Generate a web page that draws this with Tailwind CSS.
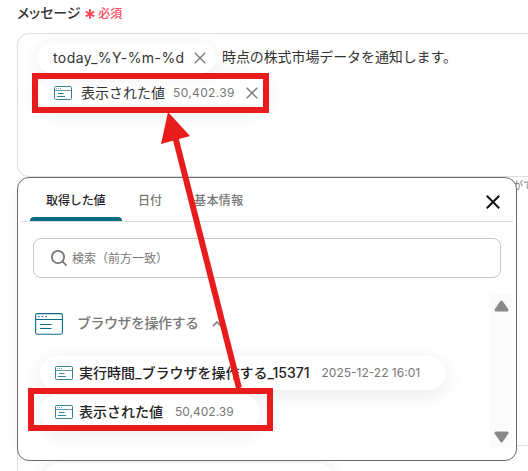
<!DOCTYPE html>
<html lang="ja">
<head>
<meta charset="utf-8">
<title>メッセージ</title>
<script src="https://cdn.jsdelivr.net/npm/@tailwindcss/browser@4"></script>
</head>
<body class="bg-white">
<svg class="hidden">
  <symbol id="browser" viewBox="0 0 28 22"><g fill="none" stroke="currentColor" stroke-width="1.1"><rect x=".6" y=".6" width="26.8" height="20.6" rx="1.6"/><path d="M1 6.5H27M5 11.5H16.5M5 15.5H16.5"/><path d="M3.2 3.6H12" stroke-dasharray="1.4 2.2"/></g></symbol>
  <symbol id="browser-small" viewBox="0 0 18 14"><g fill="none" stroke="currentColor"><rect x=".5" y=".5" width="17" height="13" rx="1"/><path d="M1 4.5H17" stroke-width=".8"/><path d="M4 7.5H9.5M3 10.5H11" stroke-width="1"/><path d="M2 2.5H8" stroke-width=".7" stroke-dasharray="1 1"/></g></symbol>
  <symbol id="cross" viewBox="0 0 12 12"><path d="M.7.7 11.3 11.3M11.3.7.7 11.3" fill="none" stroke="currentColor" stroke-width="1.3"/></symbol>
</svg>
<main class="relative h-[471px] w-[528px] overflow-hidden font-['Inter','Noto_Sans_CJK_JP',sans-serif] text-[#333] whitespace-nowrap">
  <div class="flex h-[33px] items-center pb-[8px] pl-[17px]">
    <span class="text-[14px] font-medium tracking-[-0.1px] [font-feature-settings:'palt']">メッセージ</span>
    <svg class="ml-[5px] mt-[3px] h-[10px] w-[10px]" viewBox="0 0 10 10"><path d="M5 .3V9.7M.8 2.6 9.2 7.4M9.2 2.6.8 7.4" stroke="#ff4b60" stroke-width="2"/></svg>
    <span class="ml-[3px] mt-[2px] text-[12px] font-medium text-[#ff4b60]">必須</span>
  </div>
  <section class="ml-[17px] h-[144px] w-[530px] rounded-[12px] border border-[#dddddf] pt-[9px] pl-[19px]">
    <div class="flex h-[30px] items-center">
      <div class="flex h-[30px] w-[179px] items-center rounded-full bg-white pl-[16px] shadow-[0_3px_18px_rgba(0,0,0,0.08)]">
        <span class="mt-[-1px] text-[14px] tracking-[0.43px]">today_%Y-%m-%d</span>
        <svg class="ml-[9px] h-3 w-3 text-[#777]"><use href="#cross"/></svg>
      </div>
      <span class="ml-[6px] mt-[-3px] text-[14px] tracking-[-0.1px]">時点の株式市場データを通知します。</span>
    </div>
    <div class="mt-[5px] flex h-[30px] w-[231px] items-center rounded-full bg-white pl-[17px] shadow-[0_3px_22px_rgba(0,0,0,0.1)]">
      <svg class="h-[14px] w-[18px] text-[#398398]"><use href="#browser-small"/></svg>
      <span class="mt-[-2px] ml-[9px] text-[14px]">表示された値</span>
      <span class="ml-[8px] text-[12px] tracking-[0.35px] text-[#777]">50,402.39</span>
      <svg class="ml-[11px] h-3 w-3 text-[#777]"><use href="#cross"/></svg>
    </div>
  </section>
  <div class="flex h-[20px] justify-end pt-[1px] text-[10px] text-[#777]"><span class="mr-[-5px]">がで</span></div>
  <div class="ml-[17px] h-[249px] border-b border-[#e2e2e4]"></div>
  <div class="ml-[17px] h-[25px] border-l border-[#ddd] pt-[17px] pl-[26px]"><div class="h-[32px] w-[290px] rounded-full bg-white shadow-[0_0_16px_rgba(0,0,0,0.1)]"></div></div>

  <section class="absolute top-[177px] left-[17px] flex h-[284px] w-[500px] flex-col rounded-[12px] border border-[#6b6b6b] bg-white px-[3px] shadow-[-8px_0_18px_-8px_rgba(0,0,0,0.04)]">
    <nav class="flex h-[44px] shrink-0 border-b border-[#dddddf] pl-[9px] text-[12px] font-medium text-[#777]">
      <div class="flex h-[43px] w-[92px] flex-col justify-between">
        <span class="pt-[14px] pl-[16px] tracking-[-0.1px] text-[#222]">取得した値</span>
        <i class="h-[4px] shrink-0 rounded-t-[4px] bg-[#0b6c83]"></i>
      </div>
      <span class="ml-[16px] pt-[14px]">日付</span>
      <span class="ml-[32px] pt-[14px] tracking-[0.4px]">基本情報</span>
      <svg class="mt-[17px] mr-[13px] ml-auto h-[14px] w-[14px]" viewBox="0 0 14 14"><path d="m.8.8 12.4 12.4M13.2.8.8 13.2" stroke="#111" stroke-width="2"/></svg>
    </nav>
    <div class="mt-[16px] ml-[12px] flex h-[40px] w-[468px] shrink-0 items-center rounded-[8px] border border-[#c8c8c8] pl-[17px]">
      <svg class="h-4 w-4" viewBox="0 0 16 16" fill="none" stroke="#777" stroke-width="1.8"><circle cx="7" cy="7" r="6.1"/><path d="m11.4 11.4 4.2 4.1"/></svg>
      <span class="mt-[2px] ml-[5px] text-[12px] text-[#777]">検索（前方一致）</span>
    </div>
    <div class="mt-[16px] flex h-[154px] shrink-0 overflow-hidden">
      <div class="w-[469px] overflow-hidden">
        <div class="flex h-[60px] items-center pl-[14px]">
          <svg class="h-[22px] w-[28px] text-[#0b6c83]"><use href="#browser"/></svg>
          <span class="mt-[-3px] ml-[14px] text-[14px] font-medium tracking-[-0.5px] text-[#777]">ブラウザを操作する</span>
          <svg class="ml-[13px] h-[6px] w-[10px]" viewBox="0 0 10 6"><path d="m.8 5.2 4.2-4.2 4.2 4.2" fill="none" stroke="#777" stroke-width="1.5"/></svg>
        </div>
        <div class="mt-[2px] ml-[19px] flex h-[34px] w-[406px] items-center rounded-full bg-white pl-[15px] shadow-[0_5px_20px_rgba(0,0,0,0.09)]">
          <svg class="h-[14px] w-[18px] text-[#398398]"><use href="#browser-small"/></svg>
          <span class="mt-[-2px] ml-[6px] text-[14px] font-medium text-[#222]">実行時間_ブラウザを操作する_15371</span>
          <span class="ml-[12px] text-[12px] text-[#777]">2025-12-22 16:01</span>
        </div>
        <div class="mt-[5px] ml-[19px] flex h-[34px] w-[220px] items-center rounded-full bg-white pl-[15px] shadow-[0_5px_20px_rgba(0,0,0,0.09)]">
          <svg class="h-[14px] w-[18px] text-[#398398]"><use href="#browser-small"/></svg>
          <span class="mt-[-2px] ml-[6px] text-[14px] font-medium text-[#222]">表示された値</span>
          <span class="ml-[12px] text-[12px] text-[#777]">50,402.39</span>
        </div>
      </div>
      <div class="flex w-[23px] flex-col items-center justify-between bg-[#fbfbfb] pt-[6px] pb-[5px]">
        <svg class="h-[12px] w-[15px]" viewBox="0 0 15 12"><path d="M7.5 2 13 10H2Z" fill="#888" stroke="#888" stroke-width="3" stroke-linejoin="round"/></svg>
        <svg class="h-[12px] w-[15px]" viewBox="0 0 15 12"><path d="M7.5 10 13 2H2Z" fill="#888" stroke="#888" stroke-width="3" stroke-linejoin="round"/></svg>
      </div>
    </div>
  </section>

  <svg class="absolute inset-0" width="528" height="471" fill="none" stroke="#e81c1c"><rect x="35" y="76" width="231" height="34" stroke-width="6"/><rect x="31" y="391" width="239" height="37" stroke-width="6"/><path d="M239 388 175 136" stroke-width="6"/><path d="m168 112 22 24-29 8Z" fill="#e81c1c" stroke="none"/></svg>
</main>
</body>
</html>
